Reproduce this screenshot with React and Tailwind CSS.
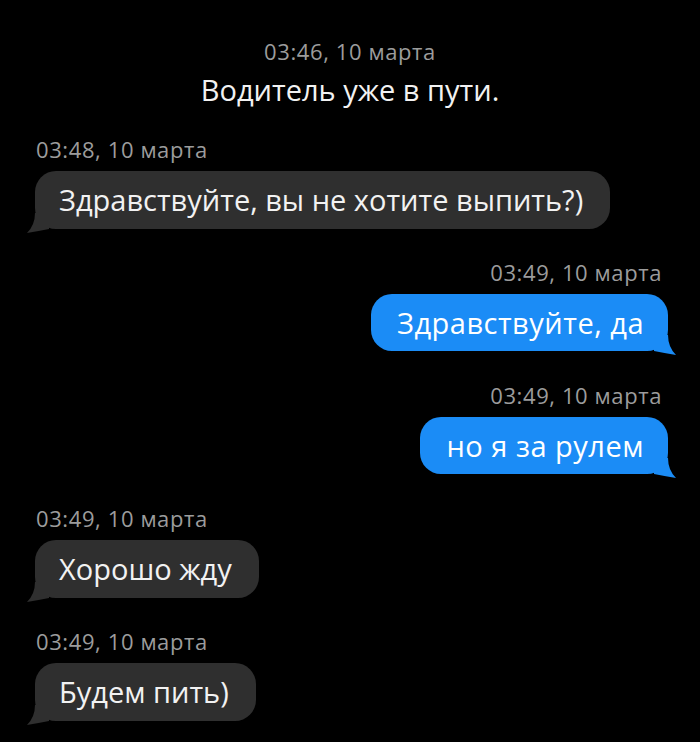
import React from 'react'

const FONT = { fontFamily: '"Open Sans", "Noto Sans", sans-serif' }

function TailLeft({ color }) {
  return (
    <svg className="absolute -left-[8px] bottom-[-4px]" width="22" height="20" viewBox="0 0 22 20">
      <path d="M22 0 L22 16 Q12 18 0 20 Q8 12 8 0 Z" fill={color} />
    </svg>
  )
}

function TailRight({ color }) {
  return (
    <svg className="absolute -right-[8px] bottom-[-4px]" width="22" height="20" viewBox="0 0 22 20">
      <path d="M0 0 L0 16 Q10 18 22 20 Q14 12 14 0 Z" fill={color} />
    </svg>
  )
}

function Stamp({ children, align }) {
  return (
    <div
      className={`text-[22px] leading-[24px] text-[#9c9c9c] tracking-[0.6px] ${align === 'right' ? 'text-right pr-[38px]' : 'pl-[36px]'}`}
    >
      {children}
    </div>
  )
}

function Incoming({ text }) {
  return (
    <div className="flex pl-[35px] mt-[10px]">
      <div className="relative bg-[#2f2f2f] rounded-[21px] h-[58px] pl-[24px] pr-[27px] flex items-center text-[29px] text-[#f2f2f2] tracking-[0px]">
        <TailLeft color="#2f2f2f" />
        <span className="relative">{text}</span>
      </div>
    </div>
  )
}

function Outgoing({ text }) {
  return (
    <div className="flex justify-end pr-[32px] mt-[10px]">
      <div className="relative bg-[#1b8cf6] rounded-[21px] h-[57px] pl-[26px] pr-[24px] flex items-center text-[29px] text-white tracking-[0.5px]">
        <TailRight color="#1b8cf6" />
        <span className="relative">{text}</span>
      </div>
    </div>
  )
}

export default function App() {
  return (
    <div className="w-[700px] h-[742px] bg-black overflow-hidden" style={FONT}>
      <div className="pt-[39px] flex flex-col">
        <div className="text-center text-[22px] leading-[24px] text-[#9c9c9c] tracking-[0.6px]">03:46, 10 марта</div>
        <div className="text-center text-[29px] leading-[34px] mt-[10px] text-[#f2f2f2] tracking-[0px]">
          Водитель уже в пути.
        </div>

        <div className="mt-[30px]">
          <Stamp>03:48, 10 марта</Stamp>
          <Incoming text="Здравствуйте, вы не хотите выпить?)" />
        </div>

        <div className="mt-[31px]">
          <Stamp align="right">03:49, 10 марта</Stamp>
          <Outgoing text="Здравствуйте, да" />
        </div>

        <div className="mt-[32px]">
          <Stamp align="right">03:49, 10 марта</Stamp>
          <Outgoing text="но я за рулем" />
        </div>

        <div className="mt-[32px]">
          <Stamp>03:49, 10 марта</Stamp>
          <Incoming text="Хорошо жду" />
        </div>

        <div className="mt-[31px]">
          <Stamp>03:49, 10 марта</Stamp>
          <Incoming text="Будем пить)" />
        </div>
      </div>
    </div>
  )
}
